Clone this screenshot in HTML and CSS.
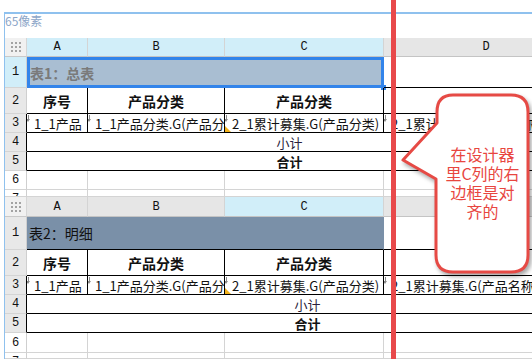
FILE: index.html
```html
<!DOCTYPE html>
<html>
<head>
<meta charset="utf-8">
<link rel="stylesheet" href="styles.css">
<title>设计器对齐</title>
</head>
<body>

<div class="frame">
  <div class="ruler">65像素</div>

  <div class="sheet s1">
    <div class="corner"><svg width="10" height="10" viewBox="0 0 10 10"><g fill="#a3a3a3"><rect x="0" y="0" width="2" height="2"/><rect x="4" y="0" width="2" height="2"/><rect x="8" y="0" width="2" height="2"/><rect x="0" y="4" width="2" height="2"/><rect x="4" y="4" width="2" height="2"/><rect x="8" y="4" width="2" height="2"/><rect x="0" y="8" width="2" height="2"/><rect x="4" y="8" width="2" height="2"/><rect x="8" y="8" width="2" height="2"/></g></svg></div>
    <div class="ch on">A</div><div class="ch on">B</div><div class="ch on">C</div><div class="ch">D</div>

    <div class="rh on">1</div>
    <div class="c title sel">表1：总表</div>
    <div class="c tb"></div>

    <div class="rh g">2</div>
    <div class="c t hd">序号</div><div class="c t hd">产品分类</div><div class="c t hd">产品分类</div><div class="c t"></div>

    <div class="rh g">3</div>
    <div class="c t f"><i class="arr"></i>1_1产品</div>
    <div class="c t f"><i class="arr"></i>1_1产品分类.G(产品分类)</div>
    <div class="c t f"><i class="arr"></i><i class="tri"></i>2_1累计募集.G(产品分类)</div>
    <div class="c t f"><i class="arr"></i>2_1累计募集.G(产品名称)</div>

    <div class="rh g">4</div>
    <div class="c t wide sub">小计</div>
    <div class="rh g">5</div>
    <div class="c t wide tot">合计</div>

    <div class="rh">6</div><div class="c"></div><div class="c"></div><div class="c"></div><div class="c"></div>
    <div class="rh cut">7</div><div class="c"></div><div class="c"></div><div class="c"></div><div class="c"></div>
  </div>

  <div class="sheet s2">
    <div class="corner"><svg width="10" height="10" viewBox="0 0 10 10"><g fill="#a3a3a3"><rect x="0" y="0" width="2" height="2"/><rect x="4" y="0" width="2" height="2"/><rect x="8" y="0" width="2" height="2"/><rect x="0" y="4" width="2" height="2"/><rect x="4" y="4" width="2" height="2"/><rect x="8" y="4" width="2" height="2"/><rect x="0" y="8" width="2" height="2"/><rect x="4" y="8" width="2" height="2"/><rect x="8" y="8" width="2" height="2"/></g></svg></div>
    <div class="ch">A</div><div class="ch">B</div><div class="ch on">C</div><div class="ch">D</div>

    <div class="rh g">1</div>
    <div class="c title dark">表2：明细</div>
    <div class="c tb"></div>

    <div class="rh g">2</div>
    <div class="c t hd">序号</div><div class="c t hd">产品分类</div><div class="c t hd">产品分类</div><div class="c t"></div>

    <div class="rh g">3</div>
    <div class="c t f"><i class="arr"></i>1_1产品</div>
    <div class="c t f"><i class="arr"></i>1_1产品分类.G(产品分类)</div>
    <div class="c t f"><i class="arr"></i><i class="tri"></i>2_1累计募集.G(产品分类)</div>
    <div class="c t f"><i class="arr"></i>2_1累计募集.G(产品名称)</div>

    <div class="rh g">4</div>
    <div class="c t wide sub">小计</div>
    <div class="rh g">5</div>
    <div class="c t wide tot">合计</div>

    <div class="rh">6</div><div class="c"></div><div class="c"></div><div class="c"></div><div class="c"></div>
    <div class="rh cut">7</div><div class="c"></div><div class="c"></div><div class="c"></div><div class="c"></div>
  </div>
</div>

<div class="redline"></div>

<div class="callout">
  <svg width="136" height="192" viewBox="0 0 136 192">
    <path d="M 55 5 H 113 Q 130 5 130 22 V 165 Q 130 182 113 182 H 55 Q 38 182 38 165 V 89 L 5 70 L 39 33 V 22 Q 39 5 55 5 Z" fill="#fff" stroke="#e64a45" stroke-width="3" stroke-linejoin="round"/>
  </svg>
  <div class="note">在设计器<br>里C列的右<br>边框是对<br>齐的</div>
</div>

</body>
</html>
```

FILE: styles.css
```css
body
{
  margin: 0;
  background: #fff;
  overflow: hidden;
  font-family: "Noto Sans CJK SC", "Liberation Sans", sans-serif;
  color: #111;
}
.frame
{
  margin: 12px 0 0 4px;
  border-top: 2px solid #8fc1ee;
  border-left: 1px solid #8fc1ee;
  overflow: hidden;
}
.ruler
{
  height: 24px;
  font-size: 12px;
  line-height: 14px;
  color: #8ca6c8;
}

.sheet
{
  display: grid;
  grid-template-columns: 22px 61px 137px 159px 205px;
  width: 600px;
}
.s1 { grid-template-rows: 19px 31px 26px 19px 19px 19px 19px 7px; }
.s2 { grid-template-rows: 20px 33px 26px 19px 19px 19px 20px 6px; }

.sheet > div
{
  box-sizing: border-box;
  overflow: hidden;
  white-space: nowrap;
}
.corner
{
  background: #f1f1f1;
  border-right: 1px solid #d6d6d6;
  border-bottom: 1px solid #c9c9c9;
  display: flex;
  align-items: center;
  justify-content: center;
}
.ch
{
  background: #e6e6e6;
  border-right: 1px solid #d4d4d4;
  border-bottom: 1px solid #c4c4c4;
  font-family: "Liberation Mono", monospace;
  font-size: 12px;
  display: flex;
  align-items: center;
  justify-content: center;
}
.ch.on { background: #d1eef9; }

.rh
{
  border-right: 1px solid #cfcfcf;
  border-bottom: 1px solid #d4d4d4;
  font-family: "Liberation Mono", monospace;
  font-size: 12px;
  display: flex;
  align-items: center;
  justify-content: center;
}
.rh.on { background: #d1eef9; }
.rh.g { background: #e8e8e8; }
.rh.cut { align-items: flex-start; padding-top: 2px; }

.c
{
  border-right: 1px solid #d4d4d4;
  border-bottom: 1px solid #d4d4d4;
  font-size: 13px;
  display: flex;
  align-items: center;
  position: relative;
}
.c.t
{
  border-right-color: #000;
  border-bottom-color: #000;
}
.c.tb { border-bottom-color: #000; }
.rh.g:nth-child(n+12) { border-right-color: #000; }

.title
{
  grid-column: 2 / 5;
  font-size: 14px;
  border-bottom-color: #000;
}
.title.sel
{
  background: #a9bed2;
  border: 3px solid #3284ea;
  color: #7a7a7a;
  font-weight: bold;
  padding-left: 0;
  overflow: visible;
}
.title.sel::after
{
  content: "";
  position: absolute;
  right: -5px;
  bottom: -5px;
  width: 5px;
  height: 5px;
  background: #3284ea;
}
.title.dark
{
  background: #7a90a8;
  border-right-color: #7a90a8;
  padding-left: 2px;
}

.hd
{
  justify-content: center;
  font-size: 14px;
  font-weight: bold;
}
.f { padding-left: 7px; }
.wide
{
  grid-column: 2 / 6;
  justify-content: center;
}
.s1 .wide { padding-right: 36px; }
.s2 .wide { padding-right: 0; }
.sub { color: #2a1f3d; }
.tot { font-weight: bold; }

.arr
{
  position: absolute;
  left: 1px;
  top: 1px;
  width: 1px;
  height: 5px;
  background: #8a8a8a;
}
.arr::after
{
  content: "";
  position: absolute;
  left: -2px;
  top: 4px;
  border-left: 2.5px solid transparent;
  border-right: 2.5px solid transparent;
  border-top: 3px solid #8a8a8a;
}
.tri
{
  position: absolute;
  left: 0;
  bottom: 0;
  border-left: 6px solid #f2b21d;
  border-top: 6px solid transparent;
}

.redline
{
  position: absolute;
  left: 391px;
  top: 0;
  width: 5px;
  height: 359px;
  background: #e8494b;
}
.callout
{
  position: absolute;
  left: 398px;
  top: 90px;
  width: 136px;
  height: 192px;
}
.callout svg
{
  display: block;
  filter: drop-shadow(2px 3px 2px rgba(0, 0, 0, 0.35));
}
.note
{
  position: absolute;
  left: 38px;
  top: 55px;
  width: 93px;
  text-align: center;
  font-size: 16px;
  line-height: 19px;
  color: #e8463f;
}
```
